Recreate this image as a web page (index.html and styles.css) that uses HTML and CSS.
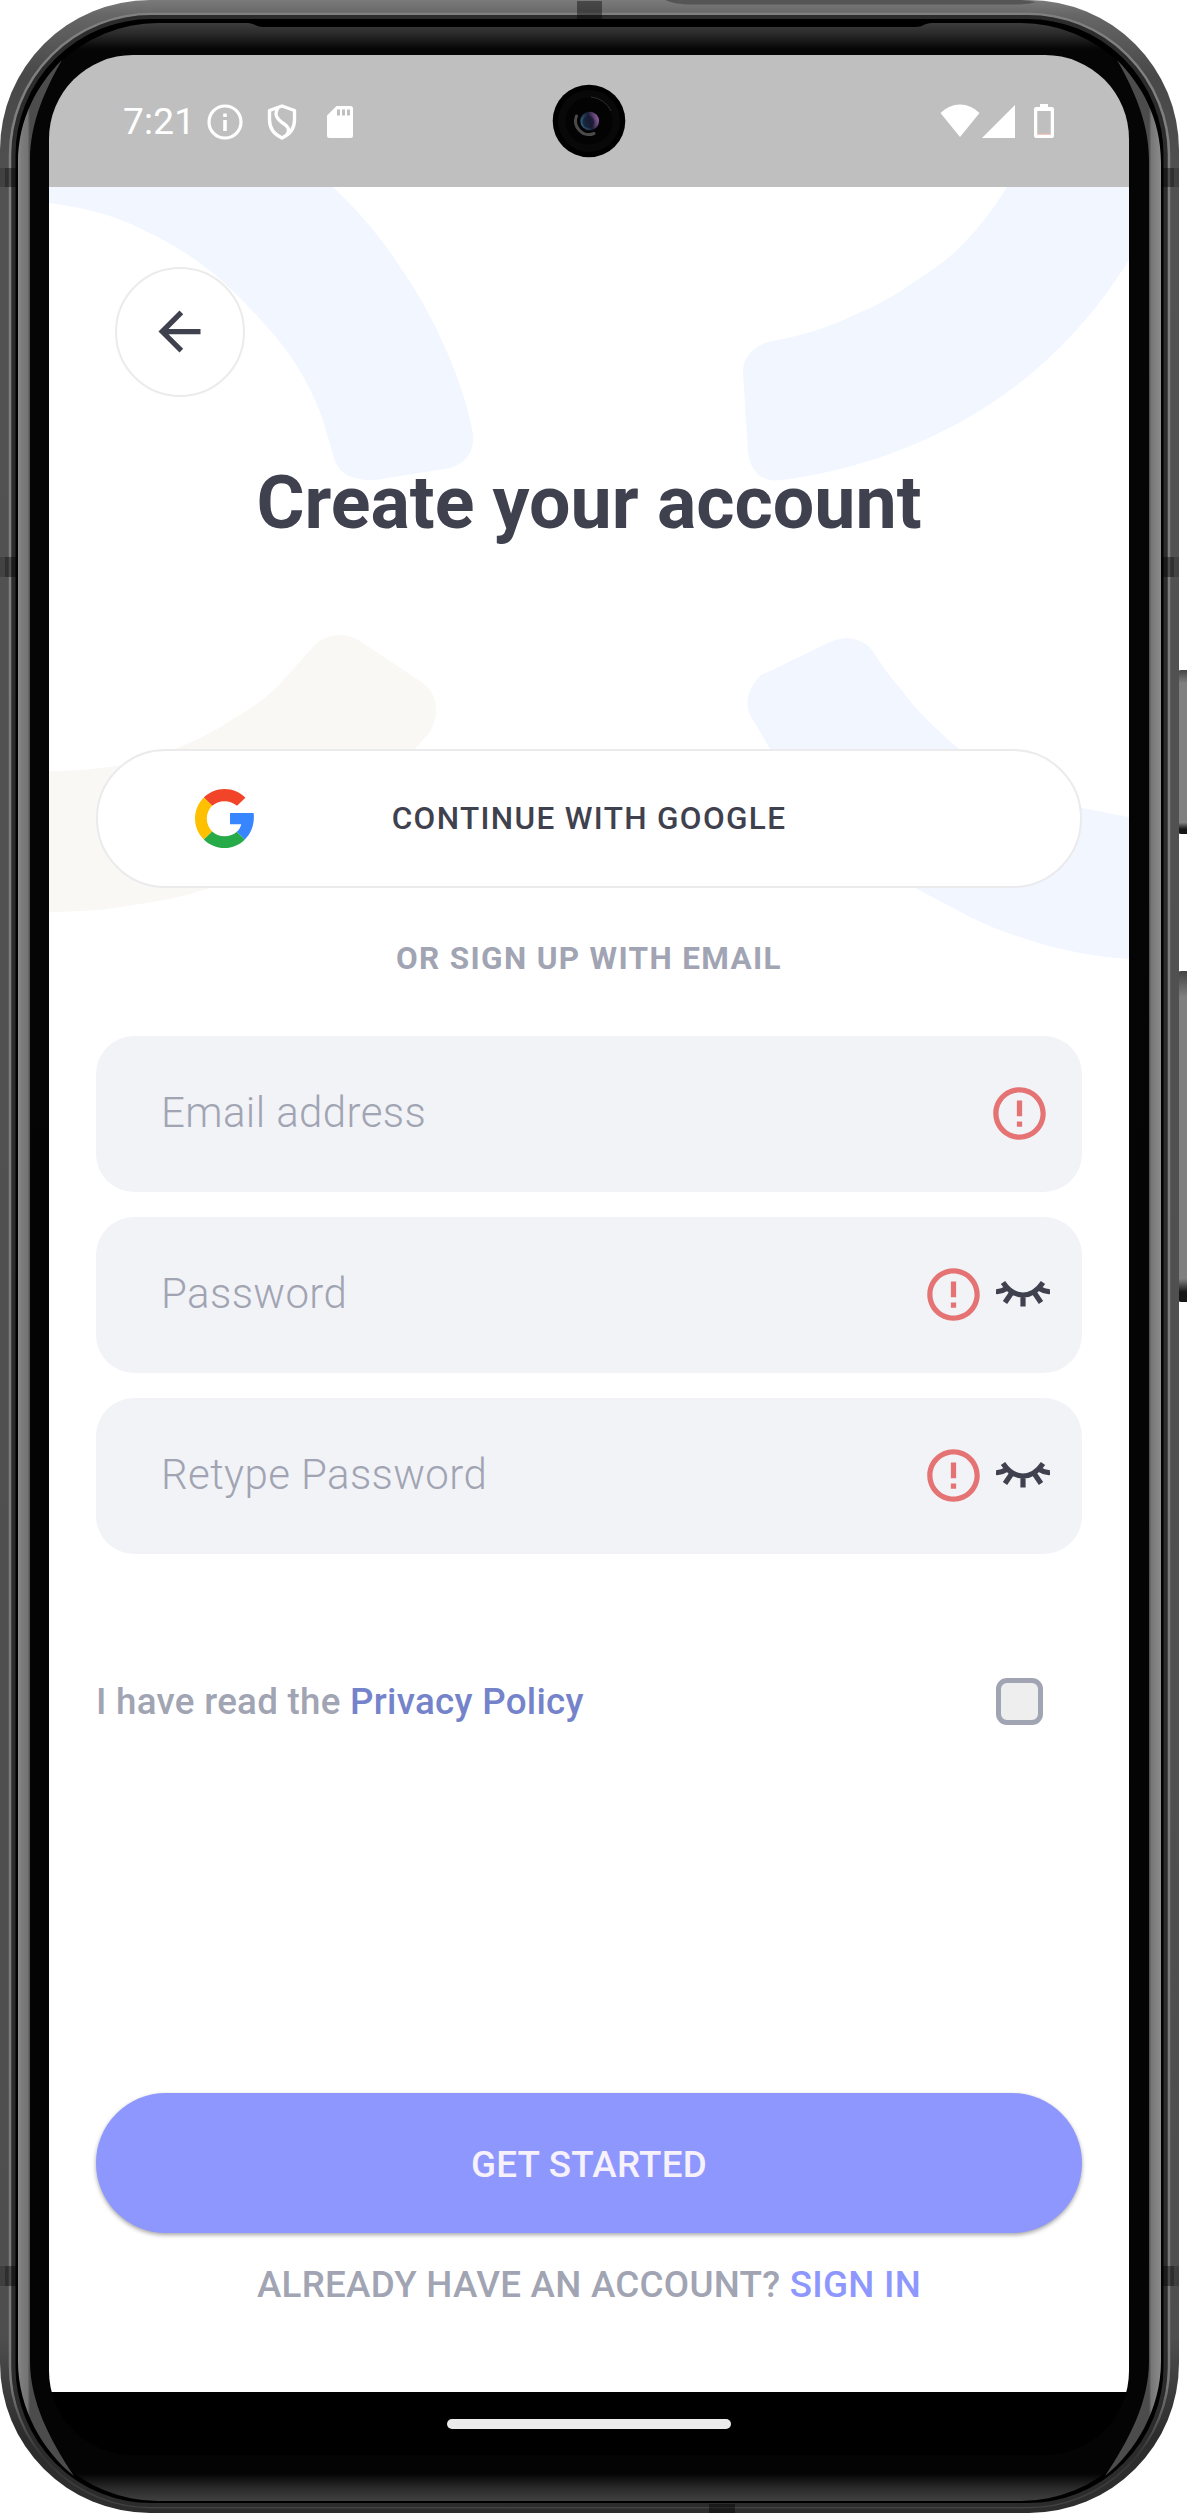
FILE: index.html
```html
<!DOCTYPE html>
<html lang="en">
<head>
<meta charset="utf-8">
<title>Create your account</title>
<link rel="stylesheet" href="styles.css">
</head>
<body>
<div class="device">
  <svg class="frame" viewBox="0 0 1187 2513" width="1187" height="2513" aria-hidden="true">
    <defs>
      <linearGradient id="body" x1="0" y1="0" x2="0" y2="1">
        <stop offset="0" stop-color="#7a7a7a"/><stop offset=".006" stop-color="#666"/><stop offset=".03" stop-color="#484848"/><stop offset=".08" stop-color="#525252"/>
        <stop offset=".93" stop-color="#4e4e4e"/><stop offset=".97" stop-color="#2c2c2c"/><stop offset="1" stop-color="#2e2e2e"/>
      </linearGradient>
      <linearGradient id="line" x1="0" y1="0" x2="0" y2="1">
        <stop offset="0" stop-color="#808080"/><stop offset=".95" stop-color="#7a7a7a"/><stop offset=".98" stop-color="#333"/><stop offset="1" stop-color="#444"/>
      </linearGradient>
      <linearGradient id="glass" gradientUnits="userSpaceOnUse" x1="0" y1="23" x2="0" y2="2501">
        <stop offset="0" stop-color="#3c3c3c"/><stop offset=".004" stop-color="#2c2c2c"/><stop offset=".0105" stop-color="#050505"/>
        <stop offset=".989" stop-color="#040404"/><stop offset=".995" stop-color="#2b2b2b"/><stop offset="1" stop-color="#404040"/>
      </linearGradient>
      <linearGradient id="shineL" gradientUnits="userSpaceOnUse" x1="18" y1="0" x2="30" y2="0">
        <stop offset="0" stop-color="#8c8c8c"/><stop offset=".25" stop-color="#7d7d7d"/><stop offset=".8" stop-color="#747474"/><stop offset="1" stop-color="#4c4c4c"/>
      </linearGradient>
      <linearGradient id="shineR" gradientUnits="userSpaceOnUse" x1="1161" y1="0" x2="1149" y2="0">
        <stop offset="0" stop-color="#8c8c8c"/><stop offset=".25" stop-color="#858585"/><stop offset=".8" stop-color="#777"/><stop offset="1" stop-color="#4c4c4c"/>
      </linearGradient>
      <linearGradient id="key" x1="0" y1="0" x2="0" y2="1">
        <stop offset="0" stop-color="#444"/><stop offset=".08" stop-color="#808080"/><stop offset=".93" stop-color="#808080"/><stop offset=".97" stop-color="#161616"/><stop offset="1" stop-color="#161616"/>
      </linearGradient>
    </defs>
    <rect x="1178" y="670" width="12" height="164" rx="3" fill="url(#key)"/>
    <rect x="1178" y="971" width="12" height="331" rx="3" fill="url(#key)"/>
    <rect x="0" y="0" width="1179" height="2513" rx="150" fill="url(#body)"/>
    <path d="M665 0C672 3 680 4.500 692 4.500H1015C1024 4.500 1030 3.500 1036 2L1021 0Z" fill="#555"/>
    <rect x="10" y="14" width="1159" height="2493" rx="141" fill="none" stroke="url(#line)" stroke-width="2.500"/>
    <rect x="13.500" y="17" width="1152" height="2488" rx="138" fill="#000" stroke="#2c2c2c" stroke-width="4"/>
    <g fill="#000" fill-opacity=".4">
      <rect x="5" y="168" width="11" height="19"/><rect x="1163" y="168" width="11" height="19"/>
      <rect x="5" y="548" width="11" height="0"/>
      <rect x="5" y="557" width="11" height="20"/><rect x="1163" y="557" width="11" height="20"/>
      <rect x="5" y="2266" width="11" height="20"/><rect x="1163" y="2266" width="11" height="20"/>
      <rect x="577" y="1" width="25" height="19"/><rect x="709" y="2504" width="26" height="9"/>
    </g>
    <g fill="#000" fill-opacity=".18">
      <rect x="0" y="168" width="5" height="19"/><rect x="1174" y="168" width="5" height="19"/>
      <rect x="0" y="557" width="5" height="20"/><rect x="1174" y="557" width="5" height="20"/>
      <rect x="0" y="2266" width="5" height="20"/><rect x="1174" y="2266" width="5" height="20"/>
    </g>
    <path d="M158 23H248C256 24 256 27 264 27H915C924 27 924 23 932 23H1021A140 140 0 0 1 1161 163V2361A140 140 0 0 1 1021 2501H158A140 140 0 0 1 18 2361V163A140 140 0 0 1 158 23Z" fill="url(#glass)"/>
    <path d="M62 60C38 84 18 118 18 163V2361C18 2410 44 2452 74 2476C50 2440 30 2402 30 2361V160C30 122 46 88 62 60Z" fill="url(#shineL)"/>
    <path d="M1117 60C1141 84 1161 118 1161 163V2361C1161 2410 1135 2452 1105 2476C1129 2440 1149 2402 1149 2361V160C1149 122 1133 88 1117 60Z" fill="url(#shineR)"/>
  </svg>

  <div class="screen">
    <header class="status">
      <div class="status-left">
        <span class="clock">7:21</span>
        <svg class="i-info" width="36" height="36" viewBox="0 0 36 36"><circle cx="18" cy="18" r="16" fill="none" stroke="#fff" stroke-width="3.200"/><path d="M16.200 16h3.600v11h-3.600zM16.200 9.500h3.600v3.600h-3.600z" fill="#fff"/></svg>
        <svg class="i-shield" width="30" height="36" viewBox="0 0 30 36" fill="none" stroke="#fff" stroke-width="3.400" stroke-linejoin="round"><path d="M15 2L27.500 6.500V16C27.500 24 22.500 30.500 15 34C7.500 30.500 2.500 24 2.500 16V6.500Z"/><path d="M11 4C7 10 9 14 15 18.500C22 23 23 26 20 31"/></svg>
        <svg class="i-sd" width="26" height="32" viewBox="0 0 26 32"><path d="M9.500 0H23.500A2.500 2.500 0 0 1 26 2.500V29.500A2.500 2.500 0 0 1 23.500 32H2.500A2.500 2.500 0 0 1 0 29.500V9.500Z" fill="#fff"/><path d="M10 3.500h3v6h-3zM15 3.500h3v6h-3zM20 3.500h3v6h-3z" fill="#bfbfbf"/></svg>
      </div>
      <svg class="camera" width="74" height="74" viewBox="-37 -37 74 74">
        <defs><linearGradient id="lens" x1="0" y1=".6" x2="1" y2=".3"><stop offset="0" stop-color="#28627c"/><stop offset=".5" stop-color="#1b1c33"/><stop offset="1" stop-color="#9a65a8"/></linearGradient></defs>
        <circle r="36.300" fill="#000"/><circle r="31" fill="#080808"/><circle r="23.500" fill="#030303"/>
        <path d="M2 -24A24 24 0 0 1 22 -10" fill="none" stroke="#2c2c2c" stroke-width="1"/>
        <path d="M-12.500 -5A13.500 13.500 0 0 0 5 12.500" fill="none" stroke="#4a4a4a" stroke-width="3" stroke-linecap="round"/>
        <circle cx=".7" r="10.500" fill="#06060a"/><circle cx=".7" r="9.300" fill="url(#lens)"/><circle cx="-.5" cy="1" r="6" fill="#151a30" fill-opacity=".7"/>
      </svg>
      <div class="status-right">
        <svg width="40" height="34" viewBox="0 0 40 34"><path d="M.5 9Q9 .5 20 .5T39.500 9L20 33Z" fill="#fff"/></svg>
        <svg class="i-signal" width="33" height="33" viewBox="0 0 33 33"><path d="M33 0V33H0Z" fill="#fff"/></svg>
        <svg class="i-battery" width="20" height="34" viewBox="0 0 20 34"><path d="M6 0H14V3H18A2 2 0 0 1 20 5V32A2 2 0 0 1 18 34H2A2 2 0 0 1 0 32V5A2 2 0 0 1 2 3H6Z" fill="#fff"/><path d="M3.300 7H16.700V30.500H3.300Z" fill="#bfbfbf"/><path d="M3.300 29.500H16.700V30.500H3.300Z" fill="#f0b7ad"/></svg>
      </div>
    </header>

    <main class="app">
      <svg class="shapes" width="1080" height="800" viewBox="49 187 1080 800" aria-hidden="true">
        <g fill="#f1f6ff">
          <path d="M49 187H333C358 211 381 237 400 267C417 291 431 316 443 343C455 369 464 395 470 420L473 434C475 451 465 464 450 468L375 480C355 481 340 475 335 461L322 417C308 380 290 352 267 327C247 304 225 282 200 263C178 247 155 235 133 225C106 213 79 207 49 203Z"/>
          <path d="M1007 187C992 211 975 233 954 253C942 263 929 273 914 282C896 295 876 306 854 315C832 326 810 333 787 338L773 341C755 344 743 356 743 372L748 452C750 472 763 483 782 480C850 471 910 450 964 420C1000 400 1028 378 1054 353C1084 325 1108 293 1129 260V187Z"/>
          <path d="M759 677C763 673 766 673 770 671L830 642C846 635 862 638 872 650C881 664 890 677 900 688C916 710 935 729 957 747C995 778 1040 801 1082 808L1129 817V959C1112 958 1096 956 1080 953C1060 949 1040 944 1020 937C1003 932 986 925 970 917L917 889C860 853 810 808 769 747L750 715C744 702 749 688 759 677Z"/>
        </g>
        <path d="M49 771C72 771 95 769 117 766C138 762 158 756 177 748C197 740 215 731 233 719C249 710 263 700 277 687L313 647C325 634 343 631 360 641L423 683C438 695 440 713 430 732L415 749C360 822 290 867 200 891C178 898 156 902 133 905C105 910 77 912 49 912Z" fill="#f9f8f4"/>
      </svg>

      <button class="back" type="button" aria-label="Back"><svg width="63" height="63" viewBox="0 0 24 24"><path d="M20 11H7.830l5.590-5.590L12 4l-8 8 8 8 1.410-1.410L7.830 13H20v-2z" fill="#3f414e"/></svg></button>
      <h1 class="title">Create your account</h1>

      <button class="google" type="button">
        <svg class="google-logo" width="59" height="59" viewBox="0 0 48 48" preserveAspectRatio="none">
          <path d="M24 9.900C28 9.900 31.500 11.400 34.200 13.700L41 7.100C36.600 2.700 30.500 0 24 0C17.500 0 11.600 2.600 7.200 6.900L14 13.600C16.500 11.300 20 9.900 24 9.900Z" fill="#f14429"/>
          <path d="M7.200 6.900C2.700 11.300 0 17.300 0 24C0 30.700 2.700 36.700 7.200 41L14 34.500C11.300 32 9.600 28.200 9.600 24C9.600 19.800 11.300 16.200 14 13.600Z" fill="#ffc000"/>
          <path d="M7.200 41C11.600 45.400 17.500 48 24 48C30.500 48 36.200 45.400 40.600 41L34 34.800C31.400 37.100 28 38.400 24 38.400C20 38.400 16.500 36.900 14 34.500Z" fill="#27ab49"/>
          <path d="M28.500 19.500H47.700C48.600 27.500 46.300 35.700 40.600 41L34 34.800C36 33.200 37.200 31 37.600 28.700H28.500Z" fill="#3785ff"/>
        </svg>
        <span>CONTINUE WITH GOOGLE</span>
      </button>
      <p class="or">OR SIGN UP WITH EMAIL</p>

      <div class="fields">
        <div class="field"><span class="ph">Email address</span>
          <svg class="err" viewBox="0 0 24 24"><use href="#error"/></svg></div>
        <div class="field"><span class="ph">Password</span>
          <svg class="err" viewBox="0 0 24 24"><use href="#error"/></svg>
          <svg class="eye" viewBox="0 0 54 26"><use href="#lashes"/></svg></div>
        <div class="field"><span class="ph">Retype Password</span>
          <svg class="err" viewBox="0 0 24 24"><use href="#error"/></svg>
          <svg class="eye" viewBox="0 0 54 26"><use href="#lashes"/></svg></div>
      </div>

      <div class="policy">
        <span>I have read the <a class="link">Privacy Policy</a></span>
        <span class="check" role="checkbox" aria-checked="false"></span>
      </div>

      <button class="start" type="button">GET STARTED</button>
      <p class="signin">ALREADY HAVE AN ACCOUNT? <a class="signin-link">SIGN IN</a></p>
    </main>
    <footer class="nav"><span class="home"></span></footer>
  </div>
</div>
<svg class="defs" width="0" height="0">
  <symbol id="error" viewBox="0 0 24 24"><path d="M11 15h2v2h-2zm0-8h2v6h-2zm.99-5C6.470 2 2 6.480 2 12s4.470 10 9.990 10C17.520 22 22 17.520 22 12S17.520 2 11.990 2zM12 20c-4.420 0-8-3.580-8-8s3.580-8 8-8 8 3.580 8 8-3.580 8-8 8z" fill="#e57373"/></symbol>
  <symbol id="lashes" viewBox="0 0 54 26"><path d="M7 1.500C13 10.500 20 14 27 14S41 10.500 47 1.500M10.500 7.500Q5 11 0 10.500M43.500 7.500Q49 11 54 10.500M15.500 12L9 21.500M38.500 12L45 21.500M27 14V25.500" fill="none" stroke="#3f414e" stroke-width="5.200"/></symbol>
</svg>
</body>
</html>
```
FILE: styles.css
```css
* { box-sizing: border-box; }
body { margin: 0; background: #fff; font-family: Roboto, "Liberation Sans", sans-serif; }
h1, p { margin: 0; }
button { font: inherit; border: 0; padding: 0; }
svg { display: block; flex: none; }
.defs { position: absolute; }

.device { position: relative; width: 1187px; height: 2513px; padding: 55px 0 0 49px; overflow: hidden; }
.frame { position: absolute; inset: 0; }

.screen { position: relative; width: 1080px; height: 2400px; display: flex; flex-direction: column; border-radius: 84px; overflow: hidden; background: #000; }

.status { height: 132px; background: #bfbfbf; display: grid; grid-template-columns: 1fr 74px 1fr; align-items: center; color: #fff; }
.status-left { display: flex; align-items: center; padding-left: 74px; }
.clock { font-size: 37px; line-height: 44px; width: 84px; padding-top: 1px; letter-spacing: .2px; }
.i-info, .i-shield, .i-sd { margin-top: 2px; }
.i-shield { margin-left: 24px; }
.i-sd { margin-left: 30px; }
.status-right { display: flex; align-items: center; justify-content: flex-end; padding-right: 75px; }
.i-signal { margin-left: 2px; }
.i-battery { margin-left: 19px; }

.app { position: relative; height: 2205px; background: #fff; padding: 80px 47px 0; display: flex; flex-direction: column; }
.shapes { position: absolute; left: 0; top: 0; }
.app > :not(.shapes) { position: relative; flex: none; }

.back { width: 130px; height: 130px; margin-left: 19px; border-radius: 50%; border: 2.5px solid #ebebeb; background: #fff; display: flex; align-items: center; justify-content: center; padding: 0 1px 1px 0; }
.title { margin-top: 61px; font-size: 73.5px; line-height: 90px; font-weight: 700; color: #3f414e; text-align: center; white-space: nowrap; }

.google { margin-top: 201px; height: 139px; border-radius: 70px; border: 2.5px solid #ebeaec; background: #fff; color: #3f414e; display: grid; grid-template-columns: 1fr auto 1fr; align-items: center; font-size: 31.5px; font-weight: 500; letter-spacing: 1.35px; }
.google-logo { margin-left: 97px; }
.or { margin-top: 53px; font-size: 31.5px; line-height: 36px; font-weight: 700; letter-spacing: 1.35px; color: #a1a4b2; text-align: center; }

.fields { margin-top: 59px; display: flex; flex-direction: column; gap: 25px; }
.field { height: 156px; border-radius: 38px; background: #f2f3f7; display: flex; align-items: center; padding: 0 32px 2px 65px; }
.ph { flex: 1; font-size: 42px; line-height: 50px; font-weight: 300; color: #a1a4b2; letter-spacing: .4px; }
.err { width: 63px; height: 63px; }
.field > .err:last-child { margin-right: -1px; }
.eye { width: 54px; height: 26px; margin-left: 11px; }

.policy { margin-top: 116px; height: 62px; display: flex; align-items: center; justify-content: space-between; padding-right: 39px; font-size: 36.75px; font-weight: 500; letter-spacing: .27px; color: #a1a4b2; }
.link { color: #7583ca; }
.check { width: 47px; height: 47px; border: 5.3px solid #a1a4b2; border-radius: 11px; background: #eee; }

.start { margin-top: 361px; height: 140px; border-radius: 70px; background: #8e97fd; color: #f6f1fb; font-size: 36.75px; font-weight: 500; letter-spacing: .27px; padding-top: 2px; box-shadow: 0 2px 4px rgba(0, 0, 0, .35); }
.signin { margin-top: 30px; font-size: 36.75px; line-height: 44px; font-weight: 500; letter-spacing: .27px; color: #a1a4b2; text-align: center; white-space: nowrap; }
.signin-link { color: #8e97fd; }

.nav { flex: 1; display: flex; justify-content: center; padding-top: 27px; }
.home { width: 284px; height: 10px; border-radius: 5px; background: #ebebeb; }
```
